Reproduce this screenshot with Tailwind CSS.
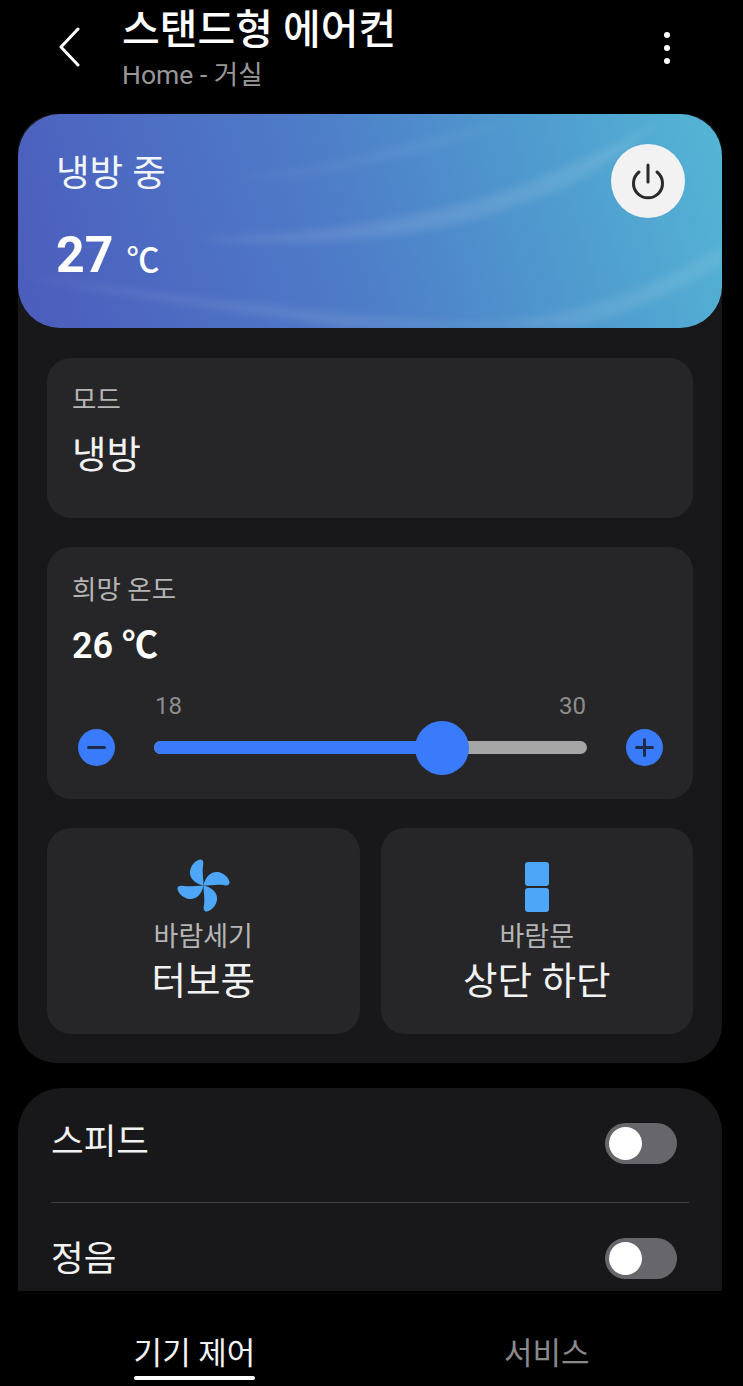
<!DOCTYPE html>
<html lang="ko">
<head>
  <meta charset="UTF-8">
  <meta name="viewport" content="width=device-width, initial-scale=1.0">
  <title>스탠드형 에어컨</title>
  <script src="https://cdn.jsdelivr.net/npm/@tailwindcss/browser@4"></script>
</head>
<body class="bg-black text-white font-['Roboto','Noto_Sans_CJK_KR',sans-serif]">
  <div class="w-[743px] h-[1386px] overflow-hidden flex flex-col">

    <!-- Header -->
    <header class="h-[114px] shrink-0 flex pl-[58px] pr-[73px]">
      <svg class="w-[24px] h-[40px] mt-[27px] mr-[40px]" viewBox="0 0 24 40" fill="none" stroke="#fff" stroke-width="3" stroke-linecap="round" stroke-linejoin="round">
        <path d="M20 2 L3 20 L20 38"/>
      </svg>
      <div class="flex-1">
        <h1 class="text-[41px] leading-[46px] mt-[7px] font-medium">스탠드형 에어컨</h1>
        <p class="text-[26.5px] leading-[32px] mt-[6px] text-[#979797]">Home - 거실</p>
      </div>
      <div class="flex flex-col gap-[7px] mt-[32px]">
        <span class="w-[6px] h-[6px] rounded-full bg-white"></span>
        <span class="w-[6px] h-[6px] rounded-full bg-white"></span>
        <span class="w-[6px] h-[6px] rounded-full bg-white"></span>
      </div>
    </header>

    <!-- Main panel -->
    <section class="ml-[18px] w-[704px] h-[949px] shrink-0 rounded-[38px] bg-[#18181a]">
      <div class="relative h-[214px] rounded-[42px] overflow-hidden bg-[linear-gradient(72deg,#4c5cbc_0%,#4e7cc8_45%,#4f9ccf_75%,#55b6d5_100%)] pl-[38px] pt-[37px]">
        <svg class="absolute inset-0 w-full h-full blur-[4px]" viewBox="0 0 704 214" fill="none" preserveAspectRatio="none">
          <path d="M0 160 C90 172 180 185 266 193 C340 202 400 208 456 208 C520 208 610 190 704 132 L704 150 C620 204 530 226 456 226 C380 226 300 208 266 204 C180 192 90 180 0 160Z" fill="#fff" fill-opacity="0.09"/>
          <path d="M170 124 C260 122 310 116 361 107 C420 96 460 88 503 71 C550 52 600 30 640 8 C600 48 550 76 503 90 C460 106 420 116 361 123 C310 129 240 131 170 124Z" fill="#fff" fill-opacity="0.1"/>
          <path d="M200 66 C270 58 320 48 361 36 C400 26 445 18 500 2 C450 28 400 40 361 48 C320 58 270 66 200 66Z" fill="#fff" fill-opacity="0.05"/>
        </svg>
        <div class="relative">
          <p class="text-[36.5px] leading-[44px] mt-[1px] text-[#f2f5fb]">냉방 중</p>
          <p class="mt-[28px] leading-[62px] flex items-baseline gap-[13px]">
            <span class="text-[50px] font-bold">27</span>
            <span class="text-[33px] font-medium">℃</span>
          </p>
        </div>
        <button class="absolute right-[37px] top-[30px] w-[74px] h-[74px] rounded-full bg-[#f2f2f2] flex items-center justify-center">
          <svg class="w-[36px] h-[38px]" viewBox="0 0 36 38" fill="none" stroke="#2a2a2a" stroke-width="3" stroke-linecap="round">
            <path d="M18 3 V20"/>
            <path d="M9 10 A14.5 14.5 0 1 0 27 10"/>
          </svg>
        </button>
      </div>

      <div class="px-[29px] pt-[30px] flex flex-col gap-[29px]">
        <!-- Mode -->
        <div class="h-[160px] rounded-[24px] bg-[#262628] pl-[25px] pt-[26px]">
          <p class="text-[26.5px] leading-[32px] text-[#b5b5b5]">모드</p>
          <p class="text-[37.5px] leading-[44px] mt-[17px] text-[#f2f2f2]">냉방</p>
        </div>

        <!-- Target temperature -->
        <div class="h-[252px] rounded-[24px] bg-[#262628] px-[25px] pt-[27px]">
          <p class="text-[26.5px] leading-[32px] text-[#b5b5b5]">희망 온도</p>
          <p class="text-[36px] leading-[44px] mt-[18px] font-semibold">26 ℃</p>
          <div class="flex justify-between pl-[83px] pr-[82px] mt-[24px] text-[24px] leading-[28px] text-[#8c8c8c]">
            <span>18</span>
            <span>30</span>
          </div>
          <div class="flex items-center h-[54px] pl-[6px] pr-[5px]">
            <span class="w-[37px] h-[37px] rounded-full bg-[#3a7bfb] flex items-center justify-center">
              <span class="w-[19px] h-[3px] rounded-full bg-[#1d2c4d]"></span>
            </span>
            <div class="relative flex-1 h-[13px] mx-[39px] rounded-full bg-[#a6a6a6]">
              <div class="h-full w-[66%] rounded-full bg-[#3a7bfb]"></div>
              <span class="absolute left-[261px] -top-[20px] w-[54px] h-[54px] rounded-full bg-[#3a7bfb]"></span>
            </div>
            <span class="relative w-[37px] h-[37px] rounded-full bg-[#3a7bfb] flex items-center justify-center">
              <span class="w-[19px] h-[3px] rounded-full bg-[#1d2c4d]"></span>
              <span class="absolute w-[3px] h-[19px] rounded-full bg-[#1d2c4d]"></span>
            </span>
          </div>
        </div>

        <!-- Wind -->
        <div class="grid grid-cols-2 gap-[21px]">
          <div class="h-[206px] rounded-[24px] bg-[#262628] flex flex-col items-center pt-[31px]">
            <svg class="w-[53px] h-[53px]" viewBox="0 0 53 53" fill="#4da6f8">
              <path d="M26.5 26.5 C18 25 12 19 13 12 C14 6 19 1 23 .5 C26 0 27 3 26 7 C25 13 26.5 20 26.5 26.5Z"/>
              <path transform="rotate(90 26.5 26.5)" d="M26.5 26.5 C18 25 12 19 13 12 C14 6 19 1 23 .5 C26 0 27 3 26 7 C25 13 26.5 20 26.5 26.5Z"/>
              <path transform="rotate(180 26.5 26.5)" d="M26.5 26.5 C18 25 12 19 13 12 C14 6 19 1 23 .5 C26 0 27 3 26 7 C25 13 26.5 20 26.5 26.5Z"/>
              <path transform="rotate(270 26.5 26.5)" d="M26.5 26.5 C18 25 12 19 13 12 C14 6 19 1 23 .5 C26 0 27 3 26 7 C25 13 26.5 20 26.5 26.5Z"/>
            </svg>
            <p class="text-[27px] leading-[32px] mt-[9px] text-[#b5b5b5]">바람세기</p>
            <p class="text-[37.5px] leading-[44px] mt-[6px] text-[#f2f2f2]">터보풍</p>
          </div>
          <div class="h-[206px] rounded-[24px] bg-[#262628] flex flex-col items-center pt-[34px]">
            <div class="h-[50px] flex flex-col gap-[2px]">
              <span class="w-[24px] h-[24px] rounded-[3px] bg-[#4da6f8]"></span>
              <span class="w-[24px] h-[24px] rounded-[3px] bg-[#4da6f8]"></span>
            </div>
            <p class="text-[27px] leading-[32px] mt-[9px] text-[#b5b5b5]">바람문</p>
            <p class="text-[37.5px] leading-[44px] mt-[6px] text-[#f2f2f2]">상단 하단</p>
          </div>
        </div>
      </div>
    </section>

    <!-- Options panel, cut off by the tab bar -->
    <section class="ml-[18px] w-[704px] mt-[25px] h-[203px] shrink-0 overflow-hidden rounded-t-[44px] bg-[#18181a] px-[33px]">
      <div class="h-[115px] flex items-center justify-between border-b border-[#424245] pb-[3px]">
        <span class="text-[35.5px] leading-[44px] text-[#f2f2f2] -mt-[4px]">스피드</span>
        <span class="w-[72px] h-[41px] rounded-full bg-[#67676b] pl-[4px] mr-[12px] flex items-center">
          <span class="w-[33px] h-[33px] rounded-full bg-white"></span>
        </span>
      </div>
      <div class="h-[88px] flex items-start justify-between pt-[35px]">
        <span class="text-[35.5px] leading-[44px] text-[#f2f2f2] -mt-[1px]">정음</span>
        <span class="w-[72px] h-[41px] rounded-full bg-[#67676b] pl-[4px] mr-[12px] flex items-center">
          <span class="w-[33px] h-[33px] rounded-full bg-white"></span>
        </span>
      </div>
    </section>

    <!-- Tabs -->
    <nav class="flex-1 flex">
      <div class="w-[389px] flex justify-center">
        <div class="pt-[43px] w-[121px] flex flex-col items-center">
          <span class="text-[31px] leading-[40px] whitespace-nowrap text-[#f2f2f2]">기기 제어</span>
          <span class="mt-[2px] w-full h-[4px] rounded-full bg-white"></span>
        </div>
      </div>
      <div class="flex-1 pt-[43px] pl-[115px]">
        <span class="text-[31px] leading-[40px] text-[#8a8a8a]">서비스</span>
      </div>
    </nav>
  </div>
</body>
</html>
